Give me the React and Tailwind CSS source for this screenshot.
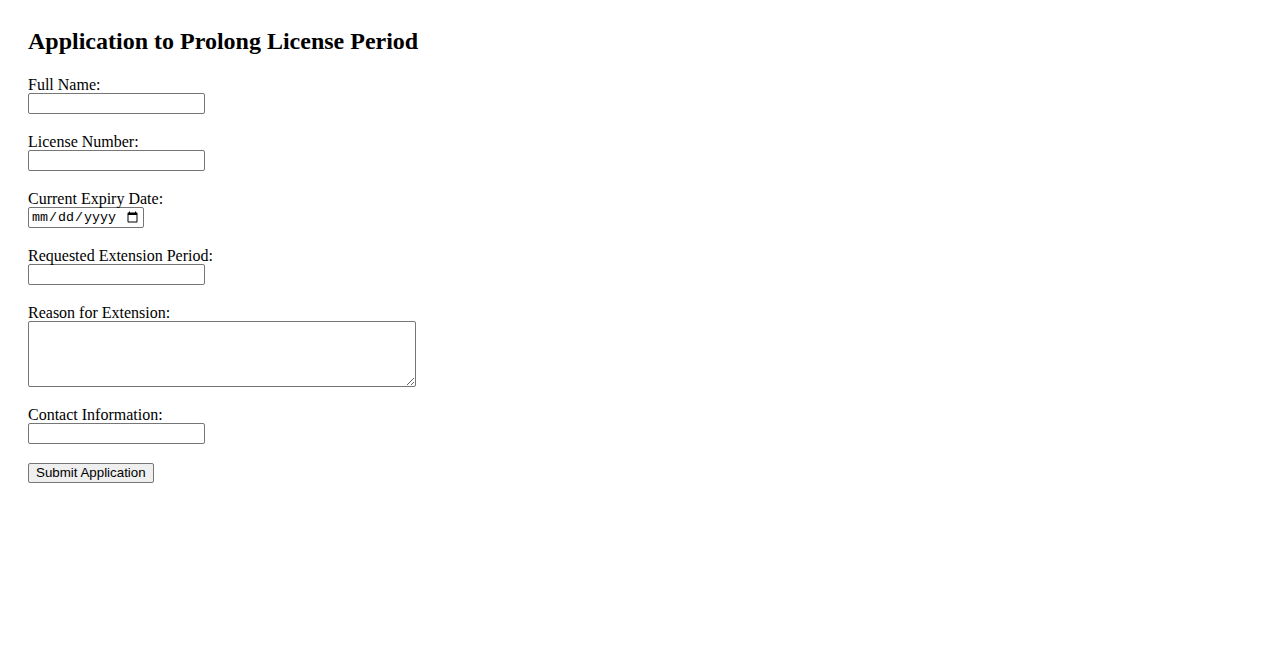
const fieldClass =
  'block h-[21px] w-[177px] rounded-[2px] border border-[#767676] bg-white px-[2px] py-[1px] text-[13.33px] font-["Liberation_Sans",Arial,sans-serif]';

const Field = ({ label, children }) => (
  <div className="mb-4">
    <label className="block pt-[3px] leading-[17px]">{label}</label>
    <div>{children}</div>
  </div>
);

const App = () => {
  return (
    <div className="min-h-[650px] bg-white px-7 pt-[27px] text-black font-['Liberation_Serif','Times_New_Roman',serif] text-[16px]">
      <h2 className="mb-[18px] text-[24px] font-bold leading-[28px]">
        Application to Prolong License Period
      </h2>

      <form onSubmit={(e) => e.preventDefault()}>
        <Field label="Full Name:">
          <input type="text" className={fieldClass} />
        </Field>

        <Field label="License Number:">
          <input type="text" className={fieldClass} />
        </Field>

        <Field label="Current Expiry Date:">
          <input
            type="date"
            className="block h-[21px] w-[116px] rounded-[2px] border border-[#767676] bg-white px-[2px] py-0 text-[13.33px] font-['Liberation_Mono',monospace]"
          />
        </Field>

        <Field label="Requested Extension Period:">
          <input type="text" className={fieldClass} />
        </Field>

        <div className="mb-4">
          <label className="block pt-[3px] leading-[17px]">Reason for Extension:</label>
          <textarea className="block h-[66px] w-[388px] rounded-[2px] border border-[#767676] bg-white px-[2px] py-[1px] text-[13.33px] font-['Liberation_Mono',monospace]" />
        </div>

        <Field label="Contact Information:">
          <input type="text" className={fieldClass} />
        </Field>

        <button
          type="submit"
          className="mt-[19px] block h-[20px] rounded-[2px] border border-[#767676] bg-[#efefef] px-[7px] text-[13.33px] leading-[16px] font-['Liberation_Sans',Arial,sans-serif] text-black"
        >
          Submit Application
        </button>
      </form>
    </div>
  );
};

export default App;
